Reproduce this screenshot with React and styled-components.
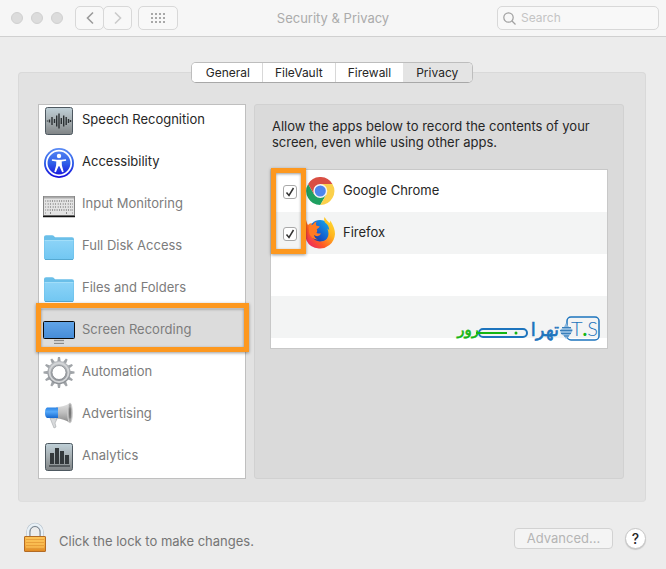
import { useState } from 'react';
import { styled, createGlobalStyle } from 'styled-components';

const highlight = '#fd981f';

const GlobalStyle = createGlobalStyle`
  * {
    box-sizing: border-box;
  }
  body {
    margin: 0;
    background: #ececec;
    color: #262626;
    font-family: Inter, 'Liberation Sans', sans-serif;
    font-size: 13px;
    line-height: 16px;
  }
  button,
  input {
    font: inherit;
    color: inherit;
    margin: 0;
  }
  svg {
    display: block;
    flex: none;
  }
`;

const Toolbar = styled.header`
  display: grid;
  grid-template-columns: 1fr auto 1fr;
  align-items: center;
  height: 37px;
  padding: 0 7px;
  background: #f6f6f6;
  border-bottom: 1px solid #d0d0d0;
`;
const ToolGroup = styled.div`
  display: flex;
  align-items: center;
  padding-left: 4px;
`;
const Lights = styled.div`
  display: flex;
  gap: 8px;
  margin-right: 12px;
`;
const Light = styled.span`
  width: 12px;
  height: 12px;
  border-radius: 50%;
  background: #dcdcdc;
  border: 1px solid #d0d0d0;
`;
const ToolButton = styled.button`
  display: flex;
  align-items: center;
  justify-content: center;
  width: ${({ $wide }) => ($wide ? '40px' : '29px')};
  height: 24px;
  padding: 0;
  background: #f8f8f8;
  border: 1px solid #d8d8d8;
  border-radius: 5px;
`;
const NavButtons = styled.div`
  display: flex;
  margin-right: 6px;
  ${ToolButton} + ${ToolButton} {
    margin-left: -1px;
  }
`;
const Title = styled.h1`
  margin: 0;
  font-size: 13px;
  font-weight: 400;
  color: #ababab;
`;
const Search = styled.label`
  display: flex;
  align-items: center;
  justify-self: end;
  gap: 5px;
  width: 162px;
  height: 24px;
  padding: 0 5px;
  background: #f8f8f8;
  border: 1px solid #d8d8d8;
  border-radius: 5px;
`;
const SearchInput = styled.input`
  flex: 1;
  min-width: 0;
  padding: 0;
  border: 0;
  outline: 0;
  background: none;
  font-size: 12px;
  &::placeholder {
    color: #c4c4c4;
    opacity: 1;
  }
`;

const Main = styled.main`
  padding: 25px 20px 0 18px;
`;
const Tabs = styled.div`
  position: relative;
  display: flex;
  width: fit-content;
  margin: 0 auto -11px;
  background: #fff;
  border: 1px solid #bdbdbd;
  border-bottom-color: #a8a8a8;
  border-radius: 5px;
  overflow: hidden;
`;
const Tab = styled.button`
  height: 19px;
  padding: 0 12px;
  border: 0;
  border-left: 1px solid ${({ $active }) => ($active ? '#e4e4e4' : '#d8d8d8')};
  background: ${({ $active }) => ($active ? '#e4e4e4' : '#fff')};
  font-size: 12px;
  line-height: 19px;
  &:first-child {
    padding-left: 14px;
    border-left: 0;
  }
  &:last-child {
    padding-right: 14px;
  }
`;
const Panel = styled.section`
  display: flex;
  gap: 8px;
  padding: 31px 21px 22px 19px;
  background: #e2e2e2;
  border: 1px solid #d9d9d9;
  border-bottom-color: #dedede;
  border-radius: 4px;
`;

const Sidebar = styled.ul`
  width: 36%;
  max-width: 208px;
  margin: 0;
  padding: 0 0 1px;
  list-style: none;
  background: #fff;
  border: 1px solid #bfbfbf;
`;
const Category = styled.li`
  position: relative;
  display: flex;
  align-items: center;
  gap: 7px;
  height: 42px;
  padding-left: 4px;
  color: ${({ $enabled }) => ($enabled ? '#262626' : '#7c7c7c')};
  background: ${({ $selected }) => ($selected ? '#dcdcdc' : 'none')};
  &:first-child {
    margin-top: -6px;
  }
`;
const CategoryName = styled.span`
  padding-bottom: 2px;
`;
const Marker = styled.span`
  position: absolute;
  inset: ${({ $inset }) => $inset};
  width: ${({ $width }) => $width || 'auto'};
  border: 5px solid ${highlight};
  box-shadow: 0 1px 3px rgba(0, 0, 0, 0.4), inset 0 1px 3px rgba(0, 0, 0, 0.4);
  pointer-events: none;
`;

const Detail = styled.div`
  flex: 1;
  min-width: 0;
  padding: 13px 15px 0;
  background: #dadada;
  border: 1px solid #d1d1d1;
  border-radius: 3px;
`;
const Description = styled.p`
  margin: 0 0 19px 2px;
`;
const AppList = styled.div`
  position: relative;
  height: 180px;
  border: 1px solid #c8c8c8;
  background: repeating-linear-gradient(#fff 0 42px, #f3f4f4 42px 84px);
`;
const AppRow = styled.label`
  display: flex;
  align-items: center;
  height: 42px;
  padding-left: 12px;
`;
const Check = styled.span`
  display: grid;
  margin: 2px 8px 0 0;
  > * {
    grid-area: 1 / 1;
  }
  svg {
    pointer-events: none;
  }
`;
const CheckInput = styled.input`
  appearance: none;
  width: 14px;
  height: 14px;
  background: #fff;
  border: 1px solid #a9a9a9;
  border-radius: 3px;
`;
const AppName = styled.span`
  margin-left: 8px;
  padding-bottom: 2px;
`;
const Brand = styled.svg`
  position: absolute;
  right: 6px;
  bottom: 3px;
`;

const Footer = styled.footer`
  display: flex;
  align-items: center;
  gap: 12px;
  padding: 20px 20px 0 22px;
`;
const LockText = styled.span`
  flex: 1;
  padding-top: 6px;
  color: #757575;
`;
const Advanced = styled.button`
  width: 99px;
  height: 21px;
  padding: 0;
  background: #f4f4f4;
  border: 1px solid #d2d2d2;
  border-radius: 4px;
  color: #b5b5b5;
  line-height: 19px;
`;
const Help = styled.button`
  width: 21px;
  height: 21px;
  padding: 0;
  background: #fff;
  border: 1px solid #c6c6c6;
  border-radius: 50%;
  box-shadow: 0 1px 1px rgba(0, 0, 0, 0.15);
  font-size: 14px;
  font-weight: 500;
  line-height: 19px;
`;

const Icon = ({ children }) => (
  <svg width="32" height="32" viewBox="0 0 32 32" aria-hidden="true">
    {children}
  </svg>
);

const Tile = ({ id }) => (
  <>
    <defs>
      <linearGradient id={id} x2="0" y2="1">
        <stop offset="0" stopColor="#bfd0d8" />
        <stop offset=".5" stopColor="#a5adb0" />
        <stop offset="1" stopColor="#808486" />
      </linearGradient>
    </defs>
    <rect x="2.5" y="3.5" width="27" height="27" rx="2" fill={`url(#${id})`} stroke="#4d5860" />
  </>
);

const SpeechIcon = () => (
  <Icon>
    <Tile id="speech" />
    <path
      d="M4.5 16.5v1M6.5 15.5v3M9 13v8M11.500 15v4M13.700 11.500v11M16 9.500v15M18.300 14v6M20.700 11.500v11M23.200 13v8M25.500 15v4M27.500 16v2"
      stroke="#2b3033"
      strokeWidth="1.400"
    />
  </Icon>
);

const AccessibilityIcon = () => (
  <Icon>
    <defs>
      <linearGradient id="access" x2="0" y2="1">
        <stop offset="0" stopColor="#5b8cf5" />
        <stop offset=".5" stopColor="#2f5fe8" />
        <stop offset="1" stopColor="#1508dc" />
      </linearGradient>
    </defs>
    <circle cx="16" cy="17" r="15" fill="url(#access)" />
    <circle cx="16" cy="17" r="12.3" fill="none" stroke="#fff" strokeWidth="1.7" />
    <circle cx="16" cy="10" r="2.2" fill="#fff" />
    <path
      d="M9 13.2l4.800.6h4.400l4.800-.6.2 1.500-4.500.9.2 4 1.800 6.200-1.600.5-2.600-6.100h-1l-2.600 6.100-1.600-.5 1.800-6.200.2-4-4.500-.9z"
      fill="#fff"
    />
  </Icon>
);

const KeyboardIcon = () => (
  <Icon>
    <rect x=".5" y="8.5" width="31" height="19" fill="#e4e4e4" stroke="#858585" />
    <path d="M1 9.5h30" stroke="#aaa" strokeWidth="2" />
    <path d="M0 28.5h32" stroke="#111" strokeWidth="1.5" />
    <g stroke="#8b8b8b" strokeWidth="2.2">
      <path d="M2.500 13h27M2.500 16h27M2.500 19h27M2.500 22h27M2.500 25h27" />
    </g>
    <g stroke="#fff" strokeWidth="1.4">
      <path d="M3 13h26M3 22h26" strokeDasharray="1.500 .8" />
      <path d="M3 16h26M3 19h26" strokeDasharray="1.800 .7" />
      <path d="M3 25h4M8 25h15M24 25h5" />
    </g>
  </Icon>
);

const FolderIcon = ({ id }) => (
  <Icon>
    <defs>
      <linearGradient id={id} x2="0" y2="1">
        <stop offset="0" stopColor="#8bd3f7" />
        <stop offset="1" stopColor="#72c7f2" />
      </linearGradient>
    </defs>
    <path
      d="M1 7q0-1.800 2-1.800h6q1.500 0 2.300 1.200.8.900 2 .9H29q2 0 2 2V28q0 1.500-1.500 1.500h-27Q1 29.500 1 28z"
      fill="#6abfe9"
    />
    <path d="M1.500 11h29v17q0 1-1 1h-27q-1 0-1-1z" fill={`url(#${id})`} />
    <path d="M1.500 10.500h29" stroke="#a2def9" />
    <path d="M2 29.500h28" stroke="#55a9d2" />
  </Icon>
);

const ScreenIcon = () => (
  <Icon>
    <defs>
      <linearGradient id="screen" x2="0" y2="1">
        <stop offset="0" stopColor="#62a5e8" />
        <stop offset="1" stopColor="#468cd7" />
      </linearGradient>
    </defs>
    <path d="M11 25h10v5H11z" fill="#cfcfcf" />
    <path d="M11 26.500h10M11 29.500h10" stroke="#8a8a8a" />
    <rect x=".5" y="7.500" width="31" height="17" rx="1" fill="url(#screen)" stroke="#0b0b0b" />
  </Icon>
);

const GearIcon = () => (
  <Icon>
    <defs>
      <linearGradient id="gear" x2="0" y2="1">
        <stop offset="0" stopColor="#b9bcc0" />
        <stop offset="1" stopColor="#8d9196" />
      </linearGradient>
    </defs>
    <g fill="#a0a4a8">
      {Array.from({ length: 12 }, (_, i) => (
        <path key={i} d="M14.200 6l.8-5h2l.8 5z" transform={`rotate(${i * 30} 16 16.5)`} />
      ))}
    </g>
    <circle cx="16" cy="16.500" r="9.300" fill="none" stroke="url(#gear)" strokeWidth="4.600" />
    <circle cx="16" cy="16.500" r="9.500" fill="none" stroke="#d3d5d7" strokeWidth="1.800" />
    <circle cx="16" cy="16.500" r="7" fill="none" stroke="#85898e" strokeWidth=".8" />
  </Icon>
);

const MegaphoneIcon = () => (
  <Icon>
    <defs>
      <linearGradient id="horn" x2="0" y2="1">
        <stop offset="0" stopColor="#e4e4e4" />
        <stop offset=".5" stopColor="#bdbdbd" />
        <stop offset="1" stopColor="#858585" />
      </linearGradient>
      <linearGradient id="grip" x2="0" y2="1">
        <stop offset="0" stopColor="#2b83e4" />
        <stop offset=".4" stopColor="#55a9fa" />
        <stop offset="1" stopColor="#1769cf" />
      </linearGradient>
    </defs>
    <path d="M7 20l4 10 2-1-1-4 2-4z" fill="#d8dadc" stroke="#a5a8aa" strokeWidth=".6" />
    <path d="M13 9q8 0 14-4v20q-6-4.500-14-4.500z" fill="url(#horn)" />
    <ellipse cx="27" cy="15" rx="2.300" ry="10" fill="#a3a3a3" stroke="#d0d0d0" />
    <ellipse cx="27" cy="15" rx="1" ry="6" fill="#777" />
    <path d="M4 9.500h11v10.500H4q-2-1-2-5.200T4 9.500z" fill="url(#grip)" />
  </Icon>
);

const AnalyticsIcon = () => (
  <Icon>
    <Tile id="analytics" />
    <path d="M7 13h4v11H7zM12 8h4v16h-4zM17 11h4v13h-4zM22 15h4v9h-4z" fill="#33383b" />
    <path d="M6 26h21" stroke="#33383b" strokeWidth="1.200" />
  </Icon>
);

const ChromeIcon = () => (
  <svg width="30" height="28" viewBox="-2 0 51 48" aria-hidden="true">
    <path d="M3.200 12A24 24 0 0 0 24 48L34.400 30 24 24 13.600 30z" fill="#1fa061" />
    <path d="M44.800 12A24 24 0 0 1 24 48L34.400 30 24 13V12z" fill="#fbd04b" />
    <path d="M3.200 12l10.400 18L24 24V12h20.800A24 24 0 0 0 3.200 12z" fill="#d94f44" />
    <circle cx="24" cy="24" r="12" fill="#f4f4f4" />
    <circle cx="24" cy="24" r="9.500" fill="#4d86ec" />
  </svg>
);

const FirefoxIcon = () => (
  <svg width="30" height="32" viewBox="0 0 30 32" aria-hidden="true">
    <defs>
      <linearGradient id="fox" x1="1" x2="0" y2="1">
        <stop offset="0" stopColor="#ffe438" />
        <stop offset=".35" stopColor="#ffb51e" />
        <stop offset=".65" stopColor="#ff5a25" />
        <stop offset="1" stopColor="#e3127d" />
      </linearGradient>
      <linearGradient id="globe" x1="1" x2="0" y2="1">
        <stop offset="0" stopColor="#18b5ee" />
        <stop offset=".6" stopColor="#1259cd" />
        <stop offset="1" stopColor="#2b246f" />
      </linearGradient>
    </defs>
    <circle cx="15" cy="14" r="11" fill="url(#globe)" />
    <path
      d="M1.500 3q0 3 1.500 5Q4.500 6 7 6q-2 3-2 9 1 8 9 9.500 7 .5 9-5 1.200-4-.7-8 1 .3 2 2Q24 8 20 5.500 18.500 3 19.500 0q2 3.500 5 6 .8-1 .8-2.500Q30 11 30 17q-.5 7-5.500 11T14 31.500Q5 31 1.500 23.500-1 16 .7 10q0-4 .8-7z"
      fill="url(#fox)"
    />
    <path
      d="M4 10q1-2.500 4-2.500 1-2 3.500-3-.8 1.800-.3 4 1.800.8 3.500.8-.3 1.700-3 3Q13 14 11.500 16q2 .8 4.500.5-1 2-3 2.500-2 .5-4-1 .5 3 4 4.500-8-.5-9-7z"
      fill="#ff7a22"
    />
  </svg>
);

const LockIcon = () => (
  <svg width="25" height="32" viewBox="0 0 25 32" aria-hidden="true">
    <defs>
      <linearGradient id="lock" x2="0" y2="1">
        <stop offset="0" stopColor="#f9b94b" />
        <stop offset=".6" stopColor="#f5ac3e" />
        <stop offset="1" stopColor="#de8620" />
      </linearGradient>
    </defs>
    <path d="M6 15V10a7 7.500 0 0 1 14 0v5" fill="none" stroke="#b4c0cb" strokeWidth="3.600" />
    <path d="M6 15V10a7 7.500 0 0 1 14 0v5" fill="none" stroke="#e9f1f7" strokeWidth="2.400" />
    <path d="M8 14V10a5 5.500 0 0 1 10 0v4" fill="none" stroke="#76818c" />
    <rect x="2.500" y="14.500" width="21" height="15" rx=".5" fill="url(#lock)" stroke="#b36b24" />
    <path d="M4 16h18M4 19h18M4 22h18M4 25h18" stroke="#ffd16b" strokeWidth=".8" />
    <path d="M4 17.500h18M4 20.500h18M4 23.500h18M4 26.500h18" stroke="#e29a38" strokeWidth=".7" />
  </svg>
);

const BrandLogo = () => (
  <Brand width="148" height="34" viewBox="-4 0 148 34" role="img" aria-label="تهران سرور T.S">
    <g fill="none" stroke="#1d74bd">
      <rect x="110" y="6" width="32" height="23" rx="4" strokeWidth="1.500" />
      <rect x="22" y="18" width="48" height="8" rx="4" strokeWidth="2" />
    </g>
    <path d="M103 19l4-3 2-4 2 3 5 4-3 5-2 2-2 2-2-3-3-2z" fill="#8ab7dd" />
    <path d="M103 19.500h12M105 16.500h9M104 22.500h10M107 25h5" stroke="#397fba" />
    <path d="M19 22h31" stroke="#14b514" strokeWidth="2" />
    <circle cx="59" cy="22" r="1.500" fill="#14b514" />
    <g fontFamily="'DejaVu Sans', sans-serif" direction="rtl">
      <text x="102" y="25" fontSize="18" fill="#1d74bd" stroke="#1d74bd" strokeWidth=".6">
        تهرا
      </text>
      <text x="22" y="24" fontSize="15" fill="#14b514" stroke="#14b514" strokeWidth=".6">
        رور
      </text>
    </g>
    <text x="114" y="25" fontFamily="Lato, sans-serif" fontSize="20" fontWeight="300" fill="#1d74bd">
      T
      <tspan fontWeight="700" fill="#14b514">.</tspan>
      S
    </text>
  </Brand>
);

const tabs = ['General', 'FileVault', 'Firewall', 'Privacy'];

const categories = [
  { name: 'Speech Recognition', icon: <SpeechIcon />, enabled: true },
  { name: 'Accessibility', icon: <AccessibilityIcon />, enabled: true },
  { name: 'Input Monitoring', icon: <KeyboardIcon /> },
  { name: 'Full Disk Access', icon: <FolderIcon id="disk" /> },
  { name: 'Files and Folders', icon: <FolderIcon id="files" /> },
  { name: 'Screen Recording', icon: <ScreenIcon />, selected: true },
  { name: 'Automation', icon: <GearIcon /> },
  { name: 'Advertising', icon: <MegaphoneIcon /> },
  { name: 'Analytics', icon: <AnalyticsIcon /> },
];

const AppEntry = ({ name, icon }) => {
  const [allowed, setAllowed] = useState(true);
  return (
    <AppRow>
      <Check>
        <CheckInput
          type="checkbox"
          checked={allowed}
          onChange={() => {
            setAllowed(!allowed);
          }}
        />
        {allowed && (
          <svg width="14" height="14" viewBox="0 0 14 14" aria-hidden="true">
            <path d="M3.500 7.500l2.500 3L10.500 3" fill="none" stroke="#333" strokeWidth="1.500" />
          </svg>
        )}
      </Check>
      {icon}
      <AppName>{name}</AppName>
    </AppRow>
  );
};

const App = () => {
  const [activeTab, setActiveTab] = useState('Privacy');
  return (
    <>
      <GlobalStyle />
      <Toolbar>
        <ToolGroup>
          <Lights>
            <Light />
            <Light />
            <Light />
          </Lights>
          <NavButtons>
            <ToolButton aria-label="Back">
              <svg width="10" height="14" viewBox="0 0 10 14">
                <path d="M8 1.500L2.500 7 8 12.500" fill="none" stroke="#9b9b9b" strokeWidth="1.600" />
              </svg>
            </ToolButton>
            <ToolButton aria-label="Forward">
              <svg width="10" height="14" viewBox="0 0 10 14">
                <path d="M2 1.500L7.500 7 2 12.500" fill="none" stroke="#cacaca" strokeWidth="1.600" />
              </svg>
            </ToolButton>
          </NavButtons>
          <ToolButton $wide aria-label="Show all">
            <svg width="14" height="10" viewBox="0 0 14 10">
              <path d="M0 1h14M0 5h14M0 9h14" stroke="#a8a8a8" strokeWidth="2" strokeDasharray="2 2" />
            </svg>
          </ToolButton>
        </ToolGroup>
        <Title>Security &amp; Privacy</Title>
        <Search>
          <svg width="13" height="13" viewBox="0 0 13 13" aria-hidden="true">
            <circle cx="5.500" cy="5.500" r="4.700" fill="none" stroke="#a0a0a0" strokeWidth="1.200" />
            <path d="M9 9l3.500 3.500" stroke="#a0a0a0" strokeWidth="1.300" />
          </svg>
          <SearchInput type="text" placeholder="Search" aria-label="Search" />
        </Search>
      </Toolbar>
      <Main>
        <Tabs role="tablist">
          {tabs.map((t) => (
            <Tab
              key={t}
              role="tab"
              aria-selected={t === activeTab}
              $active={t === activeTab}
              onClick={() => {
                setActiveTab(t);
              }}
            >
              {t}
            </Tab>
          ))}
        </Tabs>
        <Panel>
          <Sidebar>
            {categories.map((c) => {
              const { name, icon, enabled, selected } = c;
              return (
                <Category key={name} $enabled={enabled} $selected={selected}>
                  {icon}
                  <CategoryName>{name}</CategoryName>
                  {selected && <Marker $inset="-6px -4px -1px -3px" />}
                </Category>
              );
            })}
          </Sidebar>
          <Detail>
            <Description>
              Allow the apps below to record the contents of your screen, even while using other
              apps.
            </Description>
            <AppList>
              <AppEntry name="Google Chrome" icon={<ChromeIcon />} />
              <AppEntry name="Firefox" icon={<FirefoxIcon />} />
              <Marker $inset="-2px auto 94px 0" $width="35px" />
              <BrandLogo />
            </AppList>
          </Detail>
        </Panel>
      </Main>
      <Footer>
        <LockIcon />
        <LockText>Click the lock to make changes.</LockText>
        <Advanced disabled>Advanced...</Advanced>
        <Help aria-label="Help">?</Help>
      </Footer>
    </>
  );
};

export default App;
